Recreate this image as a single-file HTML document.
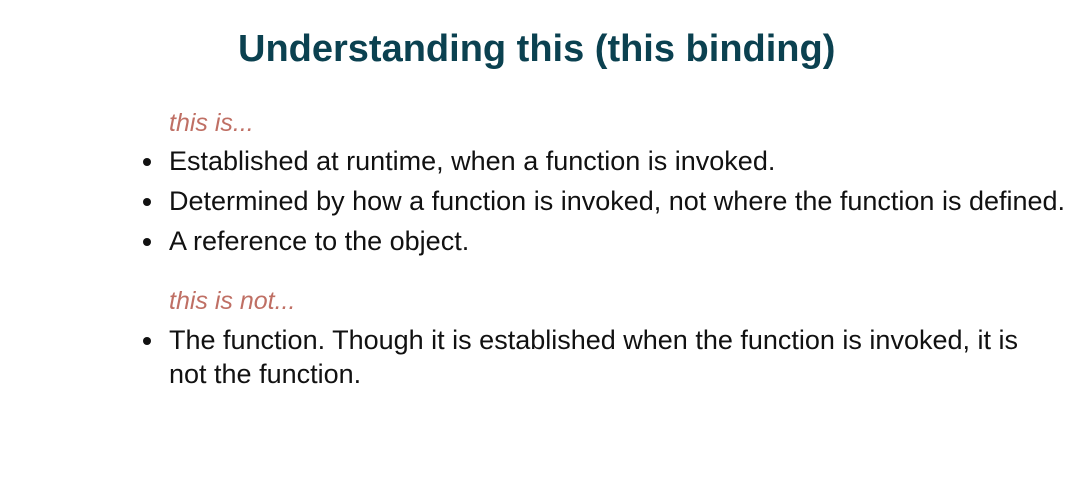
<!DOCTYPE html>
<html><head><style>
body{margin:0;width:1082px;height:491px;background:#fff;overflow:hidden;position:relative;font-family:"Liberation Sans",Arial,sans-serif}
.l{position:absolute;white-space:nowrap;line-height:1}
.t{font-weight:bold;color:#0b4150;font-size:38px;left:238px;top:30px}
.h{color:#b5574a;font-style:italic;font-size:25px;left:169px;opacity:.85}
.b{color:#111;font-size:27px;left:169px}
.d{position:absolute;width:8px;height:8px;border-radius:50%;background:#111;left:143px}
</style></head><body>
<div class="l t">Understanding this (this binding)</div>
<div class="l h" style="top:111px">this is...</div>
<div class="d" style="top:158px"></div><div class="l b" style="top:148px">Established at runtime, when a function is invoked.</div>
<div class="d" style="top:198px"></div><div class="l b" style="top:188px">Determined by how a function is invoked, not where the function is defined.</div>
<div class="d" style="top:238px"></div><div class="l b" style="top:228px">A reference to the object.</div>
<div class="l h" style="top:289px">this is not...</div>
<div class="d" style="top:337px"></div><div class="l b" style="top:327px">The function. Though it is established when the function is invoked, it is</div>
<div class="l b" style="top:361px">not the function.</div>
</body></html>
